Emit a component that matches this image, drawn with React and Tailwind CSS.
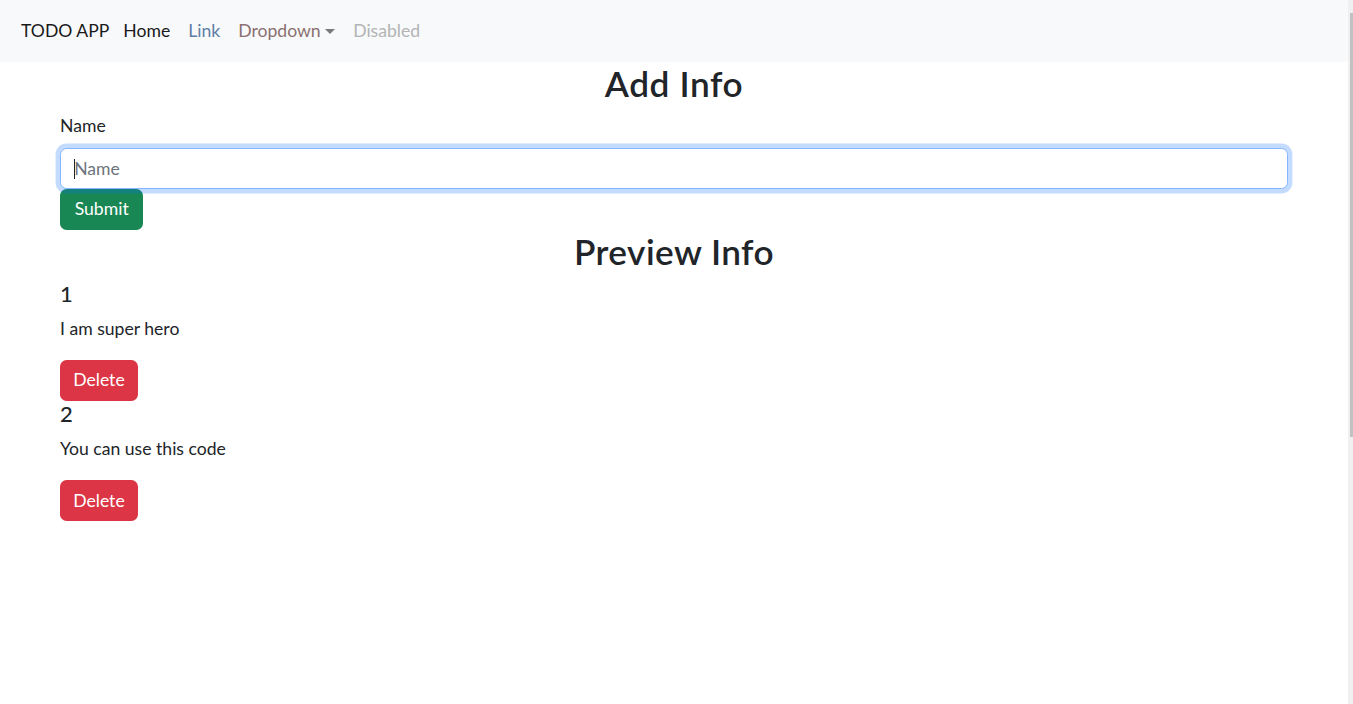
const items = [
  { id: 1, text: "I am super hero" },
  { id: 2, text: "You can use this code" },
];

const App = () => {
  return (
    <div
      className="flex h-screen bg-white text-[#212529] text-[17.6px] leading-[26.4px] overflow-hidden"
      style={{ fontFamily: "'Segoe UI', Lato, 'Noto Sans', sans-serif" }}
    >
      <div className="flex-1 min-w-0">
        <nav className="h-[61.6px] bg-[#f8f9fa] flex items-center pl-[21px] pt-[1px]">
          <a className="text-[#1a1a1a] mr-[14px]">TODO APP</a>
          <a className="text-[#1a1a1a] mr-[18px]">Home</a>
          <a className="text-[#5d7fa6] mr-[18px]">Link</a>
          <a className="text-[#8a7070] mr-[18px] flex items-center">
            Dropdown
            <span className="ml-[4.5px] w-0 h-0 border-x-[5.3px] border-x-transparent border-t-[5.3px] border-t-[#7a7a7a]" />
          </a>
          <a className="text-[#b3b4b5]">Disabled</a>
        </nav>

        <main className="px-[60px]">
          <h2 className="text-center text-[35.2px] leading-[1.2] font-semibold tracking-[0.6px] mb-[8.8px]">
            Add Info
          </h2>
          <label className="block mb-[8.8px]">Name</label>
          <div className="relative">
            <input
              className="w-full h-[41px] border border-[#86b7fe] rounded-[6.6px] px-[13.2px] bg-white outline-none caret-transparent placeholder:text-[#6c757d] shadow-[0_0_0_4.4px_rgba(13,110,253,0.25)]"
              placeholder="Name"
            />
            <span className="absolute left-[14px] top-[11px] w-px h-[20px] bg-[#212529]" />
          </div>
          <button className="h-[41px] px-[14.7px] rounded-[6.6px] bg-[#198754] text-white">
            Submit
          </button>

          <h2 className="text-center text-[35.2px] leading-[1.2] font-semibold tracking-[0.45px] mb-[8.8px]">
            Preview Info
          </h2>
          {items.map((item) => (
            <div key={item.id}>
              <h5 className="text-[22px] leading-[26.4px] font-medium mb-[8.8px]">
                {item.id}
              </h5>
              <p className="mb-[17.6px]">{item.text}</p>
              <button className="h-[41px] px-[13.2px] rounded-[6.6px] bg-[#dc3545] text-white">
                Delete
              </button>
            </div>
          ))}
        </main>
      </div>

      <div className="w-[5px] bg-[#f0f0f0] pt-[13px] flex justify-end">
        <div className="w-[3px] h-[424px] bg-[#c1c1c1]" />
      </div>
    </div>
  );
};

export default App;
